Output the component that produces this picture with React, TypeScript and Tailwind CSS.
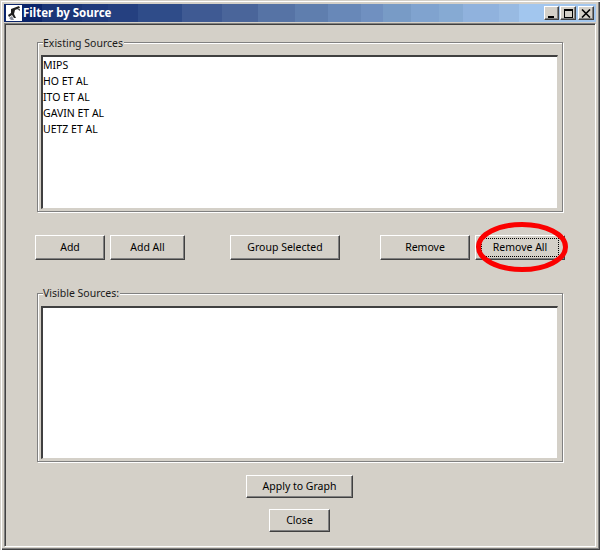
const existing = ['MIPS', 'HO ET AL', 'ITO ET AL', 'GAVIN ET AL', 'UETZ ET AL'];

function Btn({ label, className, focused }: { label: string; className: string; focused?: boolean }) {
  return (
    <div
      className={`flex items-center justify-center border-t border-l border-t-white border-l-white border-r border-b border-r-[#404040] border-b-[#404040] bg-[#d4d0c8] shadow-[inset_-1px_-1px_0_#808080] text-[10.5px] text-black ${className}`}
    >
      {focused ? (
        <div className="flex h-[19px] w-[78px] items-center justify-center border border-dotted border-black">{label}</div>
      ) : (
        label
      )}
    </div>
  );
}

function CaptionBtn({ children, className }: { children: React.ReactNode; className: string }) {
  return (
    <div
      className={`flex h-[14px] items-center justify-center border-t border-l border-t-white border-l-white border-r border-b border-r-[#404040] border-b-[#404040] bg-[#d4d0c8] shadow-[inset_-1px_-1px_0_#808080] ${className}`}
    >
      {children}
    </div>
  );
}

function Group({ title, items, heightClass, listClass, titleClass }: { title: string; items: string[]; heightClass: string; listClass: string; titleClass: string }) {
  return (
    <div className={`relative mx-[32px] border border-[#808080] shadow-[inset_1px_1px_0_#ffffff,1px_1px_0_#ffffff] ${heightClass}`}>
      <span className={`absolute left-[5px] bg-[#d4d0c8] pr-[1px] text-[10.5px] leading-[13px] text-[#1a1a1a] ${titleClass}`}>{title}</span>
      <div className={`mt-[12px] mr-[4px] ml-[3px] border-t-2 border-l-2 border-t-[#404040] border-l-[#404040] border-r border-b border-r-[#d4d0c8] border-b-[#d4d0c8] bg-white ${listClass}`}>
        {items.map(item => (
          <div key={item} className="h-[16px] text-[10.5px] leading-[16px] text-black">
            {item}
          </div>
        ))}
      </div>
    </div>
  );
}

export default function App() {
  return (
    <div className="relative flex h-[550px] w-[600px] flex-col overflow-hidden bg-[#d4d0c8] px-[4px] pt-[4px] pb-[3px] font-['Noto_Sans',sans-serif] shadow-[inset_1px_1px_0_#d4d0c8,inset_2px_2px_0_#ffffff,inset_-1px_-1px_0_#404040,inset_-2px_-2px_0_#808080]">
      {/* title bar */}
      <div className="flex h-[18px] shrink-0 items-center bg-[linear-gradient(90deg,#0a246a_38px,#1a3576_38px_78px,#203a7c_78px_104px,#254080_104px_134px,#2f4c89_134px_178px,#3f5a93_178px_218px,#4a659a_218px_254px,#5673a5_254px_291px,#5f7eae_291px_324px,#6888b8_324px_357px,#7090c0_357px_379px,#789bc6_379px_407px,#80a3cf_407px_435px,#86aad3_435px_459px,#90b2dd_459px_495px,#98bae2_495px_515px,#a2c6ee_515px)] pr-[2px]">
        <div className="ml-[2px] flex h-[16px] w-[16px] items-center justify-center bg-white">
          <svg width="16" height="16" viewBox="0 0 16 16">
            <path d="M5 4 L13 1 L14 3 L9 5 L8 9 L10 13 L8 13 L6 10 L3 12 L2 10 L5 8 Z" fill="#202020" />
            <path d="M3 13 L6 11 L8 15 L5 15 Z" fill="#8a8f9c" />
            <path d="M11 4 L14 4 L14 6 Z" fill="#555555" />
          </svg>
        </div>
        <span className="ml-[1px] text-[11.5px] font-bold text-white">Filter by Source</span>
        <div className="ml-auto flex">
          <CaptionBtn className="w-[15px]">
            <div className="mt-[7px] mr-[2px] h-[2px] w-[6px] bg-black" />
          </CaptionBtn>
          <CaptionBtn className="ml-[1px] w-[16px]">
            <div className="h-[9px] w-[9px] border border-t-2 border-black" />
          </CaptionBtn>
          <CaptionBtn className="ml-[2px] w-[16px]">
            <svg width="10" height="9" viewBox="0 0 10 9">
              <path d="M1 0.5 L9 8.5 M9 0.5 L1 8.5" stroke="#000" strokeWidth="1.6" />
            </svg>
          </CaptionBtn>
        </div>
      </div>

      {/* client area */}
      <div className="mt-[1px] flex flex-1 flex-col border-t border-l border-t-[#808080] border-l-[#808080] border-r border-b border-r-white border-b-white pt-[18px] shadow-[inset_1px_1px_0_#404040]">
        <Group title="Existing Sources" items={existing} heightClass="h-[170px]" listClass="h-[154px]" titleClass="top-[-6px]" />

        <div className="mt-[23px] flex h-[25px] pl-[30px]">
          <Btn label="Add" className="w-[70px]" />
          <Btn label="Add All" className="ml-[5px] w-[75px]" />
          <Btn label="Group Selected" className="ml-[45px] w-[110px]" />
          <Btn label="Remove" className="ml-[40px] w-[90px]" />
          <Btn label="Remove All" className="ml-[5px] w-[90px]" focused />
        </div>

        <div className="mt-[33px]">
          <Group title="Visible Sources:" items={[]} heightClass="h-[169px]" listClass="h-[153px]" titleClass="top-[-7px]" />
        </div>

        <div className="mt-[13px] flex flex-col items-center pr-[1px]">
          <Btn label="Apply to Graph" className="h-[23px] w-[107px]" />
          <Btn label="Close" className="mt-[11px] h-[23px] w-[61px]" />
        </div>
      </div>

      {/* red marker circled by hand */}
      <svg className="absolute top-[221px] left-[475px]" width="94" height="52" viewBox="0 0 94 52">
        <ellipse cx="47" cy="26" rx="43.5" ry="22.5" fill="none" stroke="#fb0000" strokeWidth="5" />
      </svg>
    </div>
  );
}
